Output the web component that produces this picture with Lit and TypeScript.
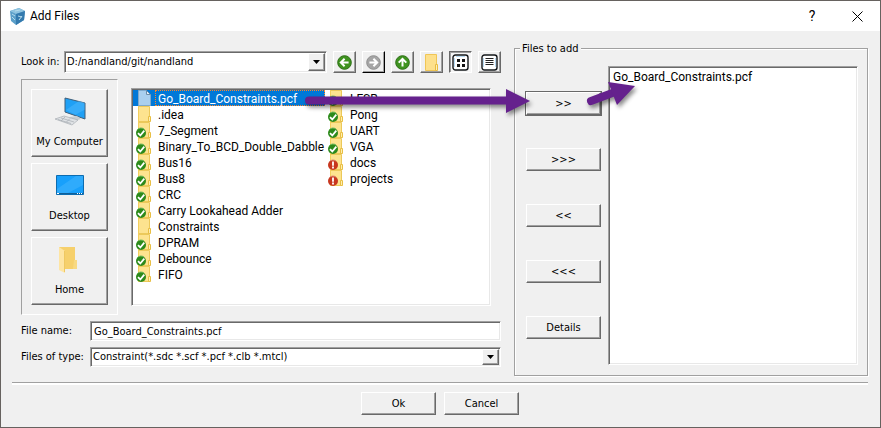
import { LitElement, html, svg, css, nothing } from "lit";
import { customElement, state } from "lit/decorators.js";
import { classMap } from "lit/directives/class-map.js";

type Badge = "ok" | "warn" | "none";
interface Entry {
  name: string;
  kind: "file" | "folder";
  badge: Badge;
}

const folder = (name: string, badge: Badge = "ok"): Entry => ({ name, kind: "folder", badge });

const ENTRIES: Entry[] = [
  { name: "Go_Board_Constraints.pcf", kind: "file", badge: "none" },
  folder(".idea", "none"),
  folder("7_Segment"),
  folder("Binary_To_BCD_Double_Dabble"),
  folder("Bus16"),
  folder("Bus8"),
  folder("CRC"),
  folder("Carry Lookahead Adder"),
  folder("Constraints", "none"),
  folder("DPRAM"),
  folder("Debounce"),
  folder("FIFO"),
  folder("LFSR"),
  folder("Pong"),
  folder("UART"),
  folder("VGA"),
  folder("docs", "warn"),
  folder("projects", "warn"),
];

const entryIcon = (e: Entry) => html`<svg class="icon" width="22" height="16" viewBox="0 0 22 16" aria-hidden="true">
  ${e.kind === "file"
    ? svg`<path d="M5.5 .5h8l4 4v11h-12z" fill="#a9cfee" stroke="#7fa9cb"/><path d="M13.5 .5v4h4z" fill="#e4f1fb" stroke="#6b8ca8"/>`
    : svg`<path d="M5.5 .5h11v15h-11z" fill="#fde38f" stroke="#ecc95a"/><path d="M5.5 0v16" stroke="#f3cf5e"/><path d="M15.5 10.5h2v5h-2z" fill="#ffeeb0" stroke="#e8bf45"/>`}
  ${e.badge === "ok"
    ? svg`<circle cx="8" cy="11" r="5" fill="#2c8a1b"/><path d="M4 8a5 5 0 0 1 7-1" stroke="#71b95d" fill="none"/><path d="M5 11.2l2.300 2.300 4-4.800" stroke="#fff" stroke-width="1.8" fill="none"/>`
    : e.badge === "warn"
      ? svg`<circle cx="8" cy="11" r="5" fill="#c8371f"/><path d="M4 8a5 5 0 0 1 7-1" stroke="#dd8674" fill="none"/><path d="M8 7.5v4.200M8 12.600v1.800" stroke="#fff" stroke-width="1.8"/>`
      : nothing}
</svg>`;

const round = (fill: string, edge: string, angle: number) => html`<svg width="15" height="15" viewBox="0 0 15 15" aria-hidden="true">
  <circle cx="7.5" cy="7.5" r="6.8" fill=${fill} stroke=${edge} />
  <g transform="rotate(${angle} 7.5 7.5)">
    <path d="M11.6 7.5H4.4M7.6 3.7L3.8 7.5l3.8 3.8" fill="none" stroke="#fff" stroke-width="2" />
  </g>
</svg>`;

const ICONS = {
  back: round("#3f9320", "#2c6f14", 0),
  forward: round("#a5a5a5", "#8f8f8f", 180),
  up: round("#3f9320", "#2c6f14", 90),
  folder: html`<svg width="15" height="17" viewBox="0 0 15 17" aria-hidden="true">
    <path d="M1.5 .5h11v16h-11z" fill="#fde08c" stroke="#f0c656" />
    <path d="M11.5 10.5h2v6h-2z" fill="#ffeeb5" stroke="#e8bc40" />
  </svg>`,
  grid: html`<svg width="17" height="17" viewBox="0 0 17 17" aria-hidden="true">
    <rect x="1" y="1" width="15" height="15" rx="2.5" fill="#fff" stroke="#15181b" stroke-width="1.4" />
    <path d="M4 2.5h9M2.5 4v9" stroke="#b8dcf5" />
    <path d="M5 5h3v3H5zM10 5h3v3h-3zM5 10h3v3H5zM10 10h3v3h-3z" fill="#111" />
  </svg>`,
  list: html`<svg width="17" height="17" viewBox="0 0 17 17" aria-hidden="true">
    <rect x="1" y="1" width="15" height="15" rx="2.5" fill="#fff" stroke="#15181b" stroke-width="1.4" />
    <path d="M2.5 4v9M14.5 4v9" stroke="#b8dcf5" />
    <path d="M4.500 4.500h8M4.500 6.500h8M4.500 8.500h8M4.500 10.500h8" stroke="#222" />
  </svg>`,
  computer: html`<svg width="32" height="32" viewBox="0 0 32 32" aria-hidden="true">
    <path d="M11 3l20 5v16l-20-7z" fill="#1fa0f5" stroke="#3f5f7a" />
    <path d="M12 15l13-9 5.500 1.800v7l-9 5z" fill="#48b4fb" opacity=".6" />
    <path d="M15 22l8-1 4 3-6 2z" fill="#c9ced2" />
    <path d="M1 24l9-3 14 4-6 5z" fill="#dfe2e5" stroke="#a7adb3" stroke-width=".7" />
    <path d="M4 24.500l13 4M7 23l13 4M7 26l4-4M12 27.500l4-4" stroke="#a7adb3" stroke-width=".7" />
  </svg>`,
  desktop: html`<svg width="32" height="32" viewBox="0 0 32 32" aria-hidden="true">
    <path d="M2.500 6.500h27v19h-27z" fill="#18a0fb" stroke="#0c6cb0" />
    <path d="M3 20L22 7h7v9L14 24H3z" fill="#3fb2fd" opacity=".6" />
    <path d="M3 24.500h26" stroke="#0f5f98" />
    <path d="M3 24.500h2M23 24.500h1M25 24.500h1M27 24.500h1" stroke="#fff" />
  </svg>`,
  home: html`<svg width="32" height="32" viewBox="0 0 32 32" aria-hidden="true">
    <path d="M5 4h16v13l2 1v8H10z" fill="#f6d06c" />
    <path d="M20 17h3v9h-4z" fill="#f8d982" />
    <path d="M5 4l6 4v22l-6-3z" fill="#fee5a3" />
    <path d="M10.500 8v21" stroke="#efc862" />
  </svg>`,
};

@customElement("app-root")
class AppRoot extends LitElement {
  @state() private view = "grid";
  @state() private selected = 0;
  @state() private fileName = "Go_Board_Constraints.pcf";

  static styles = css`
    * {
      box-sizing: border-box;
    }
    :host {
      display: flex;
      flex-direction: column;
      position: relative;
      box-sizing: border-box;
      min-height: 100vh;
      border: 1px solid #66625f;
      background: #f0f0f0;
      color: #000;
      font: 11px/14px "DejaVu Sans Condensed", "DejaVu Sans", sans-serif;
    }
    .raised {
      background: #f0f0f0;
      border: 1px solid;
      border-color: #fff #696969 #696969 #fff;
      box-shadow: inset -1px -1px #a0a0a0;
    }
    .sunken {
      background: #fff;
      border: 1px solid;
      border-color: #a0a0a0 #fff #fff #a0a0a0;
      box-shadow: inset 1px 1px #696969, inset -1px -1px #e8e8e8;
    }
    button,
    input,
    select {
      font: inherit;
      color: inherit;
      margin: 0;
      padding: 0;
      border-radius: 0;
      outline: none;
    }
    .titlebar {
      display: flex;
      align-items: center;
      height: 30px;
      padding: 0 13px 0 8px;
      background: #fff;
      font: 12px/16px Roboto, sans-serif;
    }
    .titlebar h1 {
      flex: 1;
      margin: 0 0 0 4px;
      font: inherit;
    }
    .titlebar button {
      display: flex;
      align-items: center;
      justify-content: center;
      border: 0;
      background: none;
      width: 20px;
      height: 20px;
      margin-left: 25px;
      font-size: 14px;
    }
    .content {
      flex: 1;
      display: grid;
      grid-template-columns: 480fr 354fr;
      column-gap: 13px;
      padding: 11px 12px 6px 20px;
    }
    .browser {
      display: flex;
      flex-direction: column;
      min-width: 0;
      padding: 9px 0;
    }
    .toolbar {
      display: flex;
      height: 22px;
      gap: 6px;
    }
    .toolbar label {
      width: 37px;
      line-height: 22px;
      white-space: nowrap;
    }
    .tool {
      display: flex;
      align-items: center;
      justify-content: center;
      width: 23px;
      height: 22px;
    }
    .tool.ready {
      border-color: #fff #000 #000 #fff;
    }
    .tool.down {
      border-color: #696969 #fff #fff #696969;
      box-shadow: inset 1px 1px #a0a0a0;
      background: #f6f6f6;
    }
    .drop {
      flex: 1;
      min-width: 0;
      display: grid;
      grid-template-columns: 1fr 17px;
      grid-template-rows: 1fr;
      padding: 1px;
    }
    .drop select {
      appearance: none;
      grid-area: 1 / 1 / 2 / 3;
      border: 0;
      background: none;
      padding: 0 20px 0 1px;
      width: 100%;
    }
    .drop span {
      grid-area: 1 / 2;
      display: flex;
      align-items: center;
      justify-content: center;
      pointer-events: none;
    }
    .panes {
      flex: 1;
      display: flex;
      gap: 13px;
      margin-top: 6px;
      padding-right: 10px;
    }
    .places {
      display: flex;
      flex-direction: column;
      gap: 6px;
      width: 97px;
      padding: 9px;
      border: 1px solid;
      border-color: #a0a0a0 #fff #fff #a0a0a0;
    }
    .place {
      display: flex;
      flex-direction: column;
      align-items: center;
      gap: 8px;
      height: 68px;
      padding-top: 5px;
    }
    .files {
      flex: 1;
      min-width: 0;
      display: grid;
      grid-template-rows: repeat(12, 16px);
      grid-template-columns: 192px 1fr;
      grid-auto-flow: column;
      margin: 9px 0;
      padding: 1px;
      list-style: none;
    }
    .files,
    .chosen {
      font: 12px/16px Roboto, sans-serif;
    }
    .files li {
      display: flex;
      height: 16px;
      white-space: nowrap;
    }
    .icon {
      flex: none;
    }
    .name {
      flex: 1;
      padding-left: 2px;
      border: 1px dotted transparent;
    }
    .selected {
      background: #0078d7;
      color: #fff;
    }
    .selected .name {
      border-color: #ff8728;
    }
    .field {
      display: flex;
      height: 20px;
      margin-top: 6px;
    }
    .field label {
      width: 69px;
      line-height: 20px;
      white-space: nowrap;
    }
    .field input {
      flex: 1;
      min-width: 0;
      padding: 1px 3px 0;
    }
    .group {
      position: relative;
      display: flex;
      gap: 7px;
      min-width: 0;
      margin: 6px 0 0;
      padding: 17px 9px 10px 11px;
      border: 1px solid #a0a0a0;
      box-shadow: inset 1px 1px #fff, 1px 1px #fff;
    }
    .group h2 {
      position: absolute;
      top: -7px;
      left: 5px;
      margin: 0;
      padding: 0 2px;
      background: #f0f0f0;
      font: inherit;
    }
    .moves {
      display: flex;
      flex-direction: column;
      gap: 33px;
      padding-top: 26px;
    }
    .push {
      width: 75px;
      height: 23px;
    }
    .focused {
      outline: 1px solid #696969;
    }
    .chosen {
      flex: 1;
      min-width: 0;
      margin: 0;
      padding: 2px 4px;
      list-style: none;
    }
    .actions {
      display: flex;
      justify-content: center;
      gap: 8px;
      margin: 0 12px 0 11px;
      padding: 9px 0 12px;
      border-top: 1px solid #a0a0a0;
      box-shadow: inset 0 2px #fff;
    }
    .arrows {
      position: absolute;
      left: 0;
      top: 0;
      pointer-events: none;
      filter: drop-shadow(2px 3px 2px rgba(0, 0, 0, 0.45));
    }
  `;

  private tool(label: string, icon: unknown, extra: Record<string, boolean> = {}, view?: string) {
    return html`<button
      class=${classMap({ tool: true, raised: true, ...extra })}
      aria-label=${label}
      @click=${() => view && (this.view = view)}
    >
      ${icon}
    </button>`;
  }

  private drop(id: string, value: string) {
    return html`<div class="drop sunken">
      <select id=${id}>
        <option>${value}</option>
      </select>
      <span class="raised"><svg width="7" height="4" viewBox="0 0 7 4"><path d="M0 0h7L3.500 4z" /></svg></span>
    </div>`;
  }

  private pick(i: number) {
    this.selected = i;
    if (ENTRIES[i].kind === "file") this.fileName = ENTRIES[i].name;
  }

  render() {
    return html`
      <header class="titlebar">
        <svg width="17" height="17" viewBox="0 0 17 17" aria-hidden="true">
          <path d="M1 3l9-3 6 3-1 9-8 5-5-4z" fill="#5b9fc9" />
          <path d="M1 3l9-3 6 3-9 3z" fill="#8fc4e0" />
          <path d="M7 6l9-3-1 9-8 5z" fill="#347aae" />
          <path d="M3 6l3 2M3 9l3 3M9 8l4 1M10 12l3-4M6 3l5-1" stroke="#b5dcec" />
        </svg>
        <h1>Add Files</h1>
        <button aria-label="Help">?</button>
        <button aria-label="Close">
          <svg width="11" height="11" viewBox="0 0 11 11"><path d="M.5 .5l10 10M10.500 .5l-10 10" stroke="#000" /></svg>
        </button>
      </header>
      <main class="content">
        <section class="browser">
          <div class="toolbar">
            <label for="look-in">Look in:</label>
            ${this.drop("look-in", "D:/nandland/git/nandland")}
            ${this.tool("Back", ICONS.back)} ${this.tool("Forward", ICONS.forward, { ready: true })}
            ${this.tool("Parent folder", ICONS.up)} ${this.tool("New folder", ICONS.folder)}
            ${this.tool("List view", ICONS.grid, { down: this.view === "grid" }, "grid")}
            ${this.tool("Detail view", ICONS.list, { down: this.view === "list" }, "list")}
          </div>
          <div class="panes">
            <nav class="places">
              <button class="place raised">${ICONS.computer}<span>My Computer</span></button>
              <button class="place raised">${ICONS.desktop}<span>Desktop</span></button>
              <button class="place raised">${ICONS.home}<span>Home</span></button>
            </nav>
            <ul class="files sunken" role="listbox" aria-label="Files">
              ${ENTRIES.map(
                (e, i) => html`<li
                  role="option"
                  aria-selected=${i === this.selected}
                  class=${classMap({ selected: i === this.selected })}
                  @click=${() => this.pick(i)}
                >
                  ${entryIcon(e)}<span class="name">${e.name}</span>
                </li>`,
              )}
            </ul>
          </div>
          <div class="field">
            <label for="file-name">File name:</label>
            <input id="file-name" class="sunken" .value=${this.fileName} />
          </div>
          <div class="field">
            <label for="file-type">Files of type:</label>
            ${this.drop("file-type", "Constraint(*.sdc *.scf *.pcf *.clb *.mtcl)")}
          </div>
        </section>
        <section class="group">
          <h2>Files to add</h2>
          <div class="moves">
            <button class="push raised focused">&gt;&gt;</button>
            <button class="push raised">&gt;&gt;&gt;</button>
            <button class="push raised">&lt;&lt;</button>
            <button class="push raised">&lt;&lt;&lt;</button>
            <button class="push raised">Details</button>
          </div>
          <ul class="chosen sunken">
            <li>Go_Board_Constraints.pcf</li>
          </ul>
        </section>
      </main>
      <footer class="actions">
        <button class="push raised">Ok</button>
        <button class="push raised">Cancel</button>
      </footer>
      <svg class="arrows" width="700" height="140" viewBox="1 1 700 140" aria-hidden="true">
        <path d="M309 100.500H507" stroke="#65218d" stroke-width="8" stroke-linecap="round" />
        <path d="M506 89l24 12-24 12z" fill="#65218d" />
        <path d="M591 101l24-9" stroke="#65218d" stroke-width="8" stroke-linecap="round" />
        <path d="M608 82l27 4-18 19z" fill="#65218d" />
      </svg>
    `;
  }
}
